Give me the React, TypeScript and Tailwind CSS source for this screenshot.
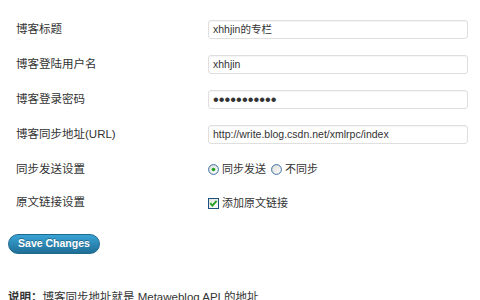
import React from "react";

function Radio({ checked }: { checked?: boolean }) {
  return (
    <svg width="11" height="11" viewBox="0 0 11 11" className="shrink-0">
      <defs>
        <linearGradient id={checked ? "rg1" : "rg2"} x1="0" y1="0" x2="1" y2="1">
          <stop offset="0" stopColor="#dcdcd6" />
          <stop offset="1" stopColor="#ffffff" />
        </linearGradient>
      </defs>
      <circle cx="5.5" cy="5.5" r="4.9" fill={`url(#${checked ? "rg1" : "rg2"})`} stroke="#3a6ea5" strokeWidth="1" />
      {checked && <circle cx="5.5" cy="5.5" r="1.8" fill="#21a121" />}
    </svg>
  );
}

function Checkbox() {
  return (
    <svg width="11" height="11" viewBox="0 0 11 11" className="shrink-0">
      <defs>
        <linearGradient id="cbg" x1="0" y1="0" x2="1" y2="1">
          <stop offset="0" stopColor="#e0e0da" />
          <stop offset="1" stopColor="#ffffff" />
        </linearGradient>
      </defs>
      <rect x="0.5" y="0.5" width="10" height="10" fill="url(#cbg)" stroke="#1c5180" strokeWidth="1" />
      <path d="M2.3 5.2 L4.4 7.6 L8.6 2.8" fill="none" stroke="#21a121" strokeWidth="1.8" />
    </svg>
  );
}

function Row({ label, children, h = "h-[35px]" }: { label: string; children: React.ReactNode; h?: string }) {
  return (
    <div className={`flex items-center ${h}`}>
      <div className="w-[208px] pl-4 text-[11.5px] text-[#333]">{label}</div>
      <div className="flex items-center">{children}</div>
    </div>
  );
}

function Box({ children, cls = "" }: { children: React.ReactNode; cls?: string }) {
  return (
    <div
      className={`flex h-[19px] w-[260px] items-center rounded-[3px] border border-[#dfdfdf] bg-white px-[4px] text-[10.5px] text-[#333] shadow-[inset_0_1px_1px_rgba(0,0,0,0.04)] ${cls}`}
    >
      {children}
    </div>
  );
}

export default function App() {
  return (
    <div className="h-[300px] w-[480px] overflow-hidden bg-white font-['Liberation_Sans','Noto_Sans_CJK_SC',sans-serif] text-[#333]">
      <div className="pt-3">
        <Row label="博客标题">
          <Box>xhhjin的专栏</Box>
        </Row>
        <Row label="博客登陆用户名">
          <Box>xhhjin</Box>
        </Row>
        <Row label="博客登录密码">
          <Box cls="text-[16.5px] leading-none">
            <span className="-mt-[1px]">•••••••••••</span>
          </Box>
        </Row>
        <Row label="博客同步地址(URL)">
          <Box>http://write.blog.csdn.net/xmlrpc/index</Box>
        </Row>
        <Row label="同步发送设置">
          <div className="flex items-center text-[11px]">
            <Radio checked />
            <span className="ml-[3px]">同步发送</span>
            <span className="ml-[5px]">
              <Radio />
            </span>
            <span className="ml-[3px]">不同步</span>
          </div>
        </Row>
        <Row label="原文链接设置" h="h-[32px]">
          <div className="flex items-center text-[11px]">
            <Checkbox />
            <span className="ml-[3px]">添加原文链接</span>
          </div>
        </Row>
      </div>
      <div className="ml-2 mt-[15px] flex h-[20px] w-[92px] items-center justify-center rounded-full border border-[#1e6a8d] bg-gradient-to-b from-[#3aa4d6] to-[#1f6f97] text-[10.5px] font-bold text-white [text-shadow:0_-1px_0_rgba(0,0,0,0.3)]">
        Save Changes
      </div>
      <div className="ml-2 mt-[35px] text-[11.5px] leading-[16px] text-[#333]">
        <span className="font-bold">说明：</span>博客同步地址就是 Metaweblog API 的地址
      </div>
    </div>
  );
}
